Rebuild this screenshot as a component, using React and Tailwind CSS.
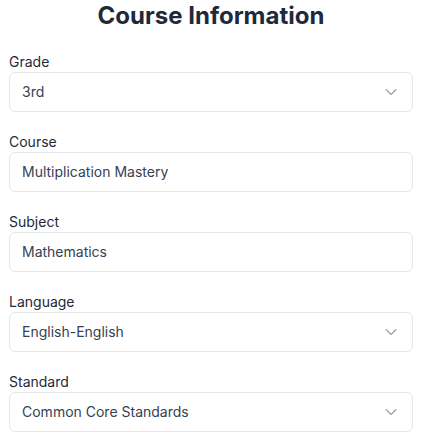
import React from "react";
import { ChevronDown } from "lucide-react";

function Field({ label, value, select }) {
  return (
    <div className="flex flex-col">
      <label className="text-sm leading-5 text-gray-800">{label}</label>
      <div className="flex h-10 items-center justify-between rounded-md border border-gray-200 bg-white pl-3 pr-[11px] text-sm text-gray-700">
        <span>{value}</span>
        {select && <ChevronDown className="h-5 w-5 text-gray-400" strokeWidth={1.4} />}
      </div>
    </div>
  );
}

export default function App() {
  return (
    <div className="bg-white pl-[9px] pr-2" style={{ fontFamily: "Inter, 'Noto Sans', sans-serif" }}>
      <h1 className="text-center text-2xl font-bold leading-8 text-gray-800 mb-5">Course Information</h1>
      <div className="flex flex-col gap-5">
        <Field label="Grade" value="3rd" select />
        <Field label="Course" value="Multiplication Mastery" />
        <Field label="Subject" value="Mathematics" />
        <Field label="Language" value="English-English" select />
        <Field label="Standard" value="Common Core Standards" select />
      </div>
    </div>
  );
}
